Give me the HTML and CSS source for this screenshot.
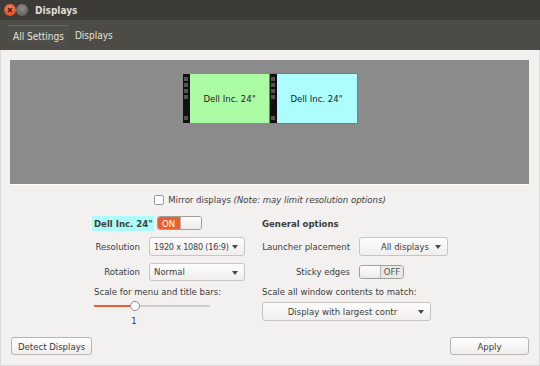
FILE: index.html
```html
<!DOCTYPE html>
<html lang="en">
<head>
  <meta charset="UTF-8">
  <title>Displays</title>
  <link rel="stylesheet" href="styles.css">
</head>
<body>
  <!-- Window title bar -->
  <div class="titlebar">
    <span class="win-btn close">
      <svg width="8" height="8" viewBox="0 0 8 8"><path d="M2 2 L6 6 M6 2 L2 6" stroke="#3a1a12" stroke-width="1.3"/></svg>
    </span>
    <span class="win-btn minimize"></span>
    <span class="title">Displays</span>
  </div>

  <!-- Toolbar -->
  <div class="toolbar">
    <span class="tab active">All Settings</span>
    <span class="tab">Displays</span>
  </div>

  <div class="content">
    <!-- Monitor arrangement -->
    <div class="arrangement">
      <div class="monitors">
        <div class="monitor green">
          <div class="strip"><i></i><i></i><i></i><i></i><i class="last"></i></div>
          <div class="screen">Dell Inc. 24"</div>
        </div>
        <div class="monitor cyan selected">
          <div class="strip"><i></i><i></i><i></i><i></i><i class="last"></i></div>
          <div class="screen">Dell Inc. 24"</div>
        </div>
      </div>
    </div>

    <div class="mirror">
      <span class="checkbox"></span>
      <span>Mirror displays <em>(Note: may limit resolution options)</em></span>
    </div>

    <div class="settings">
      <!-- Monitor options -->
      <div class="column left">
        <div class="head">
          <span class="monitor-name">Dell Inc. 24"</span>
          <span class="switch on"><b>ON</b><i></i></span>
        </div>
        <div class="field">
          <span class="label">Resolution</span>
          <span class="combo res">1920 x 1080 (16:9)<span class="arrow"></span></span>
        </div>
        <div class="field">
          <span class="label">Rotation</span>
          <span class="combo rot">Normal<span class="arrow"></span></span>
        </div>
        <div class="caption">Scale for menu and title bars:</div>
        <div class="slider">
          <div class="track"><div class="fill" style="width: 40px;"></div><div class="knob"></div></div>
          <div class="value">1</div>
        </div>
      </div>

      <!-- General options -->
      <div class="column right">
        <div class="head bold">General options</div>
        <div class="field">
          <span class="label">Launcher placement</span>
          <span class="combo launcher">All displays<span class="arrow"></span></span>
        </div>
        <div class="field">
          <span class="label">Sticky edges</span>
          <span class="switch off"><i></i><b>OFF</b></span>
        </div>
        <div class="caption">Scale all window contents to match:</div>
        <span class="combo wide">Display with largest contr<span class="arrow"></span></span>
      </div>
    </div>

    <div class="actions">
      <button>Detect Displays</button>
      <button class="apply">Apply</button>
    </div>
  </div>
</body>
</html>
```

FILE: styles.css
```css
/* Window chrome */
body {
  margin: 0;
  width: 540px;
  height: 366px;
  overflow: hidden;
  background: #f2f1f0;
  font-family: "DejaVu Sans Condensed", "DejaVu Sans", sans-serif;
  font-size: 9.5px;
  color: #3c3c3c;
}
.titlebar {
  height: 20px;
  background: #3c3b37;
  display: flex;
  align-items: center;
  padding-left: 4px;
}
.win-btn {
  width: 12px;
  height: 12px;
  border-radius: 50%;
  display: flex;
  align-items: center;
  justify-content: center;
}
.close {
  background: radial-gradient(circle at 50% 35%, #f28a6a, #e2502a 70%);
}
.minimize {
  background: radial-gradient(circle at 50% 35%, #8e8c86, #67655f 70%);
}
.title {
  margin-left: 7px;
  color: #dfdbd2;
  font-weight: bold;
  font-size: 10px;
}
.toolbar {
  height: 30px;
  background: #4c4b46;
  display: flex;
  align-items: center;
  padding-left: 8px;
  gap: 1px;
}
.tab {
  color: #e6e3dc;
  font-size: 10px;
  padding: 5px 5px 4px;
}
.tab.active {
  border-top: 1px solid #6a6963;
  background: #4f4e49;
}

/* Content */
.content {
  height: 316px;
  border: 1px solid #dcdad6;
  border-top: none;
  box-sizing: border-box;
  display: flex;
  flex-direction: column;
}
.arrangement {
  margin: 10px 10px 0 9px;
  height: 125px;
  background: #8b8b8b;
  border-bottom: 1px solid #fff;
  display: flex;
  justify-content: center;
  padding-top: 14px;
  box-sizing: border-box;
}
.monitors {
  display: flex;
  height: 49px;
}
.monitor {
  display: flex;
  width: 87px;
  height: 49px;
  box-sizing: border-box;
}
.monitor.selected {
  outline: 1px solid #d9574a;
}
.strip {
  width: 7px;
  background: #111;
  display: flex;
  flex-direction: column;
  align-items: center;
  padding-top: 3px;
  gap: 2px;
}
.strip i {
  width: 4px;
  height: 4px;
  background: #555;
}
.strip i.last {
  margin-top: auto;
  margin-bottom: 3px;
}
.screen {
  flex: 1;
  display: flex;
  align-items: center;
  justify-content: center;
  font-size: 9.5px;
  color: #222;
}
.green .screen {
  background: #abfca4;
}
.cyan .screen {
  background: #adfdfd;
}

.mirror {
  display: flex;
  justify-content: center;
  align-items: center;
  gap: 4px;
  margin-top: 9px;
}
.checkbox {
  width: 8px;
  height: 8px;
  border: 1px solid #9a9893;
  border-radius: 2px;
  background: #fff;
}

/* Option columns */
.settings {
  display: flex;
  margin-top: 10px;
  padding-left: 93px;
}
.column {
  display: flex;
  flex-direction: column;
}
.column.left {
  width: 168px;
}
.head {
  display: flex;
  align-items: center;
  height: 16px;
  gap: 3px;
  white-space: nowrap;
}
.bold, .monitor-name {
  font-weight: bold;
  color: #3c3c3c;
}
.monitor-name {
  background: #adfcfd;
  padding: 2px 1px 2px 2px;
  margin-left: -2px;
}
.field {
  display: flex;
  align-items: center;
  height: 19px;
  margin-top: 6px;
  gap: 9px;
  white-space: nowrap;
}
.left .label {
  width: 46px;
  text-align: right;
}
.right .label {
  width: 88px;
  text-align: right;
}
.combo {
  height: 19px;
  box-sizing: border-box;
  border: 1px solid #c8c5c0;
  border-radius: 3px;
  background: linear-gradient(#fdfdfd, #f0efed);
  display: flex;
  align-items: center;
  padding: 0 6px;
  position: relative;
  white-space: nowrap;
}
.arrow {
  position: absolute;
  right: 6px;
  top: 7px;
  border-left: 3px solid transparent;
  border-right: 3px solid transparent;
  border-top: 4px solid #4a4a4a;
}
.combo.res {
  width: 96px;
  padding-left: 4px;
  font-size: 9px;
  letter-spacing: -0.2px;
}
.combo.rot {
  width: 96px;
  height: 18px;
  padding-left: 4px;
}
.combo.launcher {
  width: 89px;
  justify-content: flex-end;
  padding-right: 18px;
}
.combo.wide {
  width: 169px;
  justify-content: center;
  padding-right: 14px;
  margin-top: 4px;
}
.caption {
  margin-top: 3px;
  height: 14px;
  display: flex;
  align-items: center;
  white-space: nowrap;
}
.switch {
  display: flex;
  width: 45px;
  height: 14px;
  border: 1px solid #a19f9a;
  border-radius: 3px;
  box-sizing: border-box;
  overflow: hidden;
  font-size: 9.5px;
}
.switch b {
  flex: 1;
  display: flex;
  align-items: center;
  justify-content: center;
  font-weight: normal;
}
.switch i {
  width: 20px;
  background: linear-gradient(#fdfdfd, #eceae7);
}
.switch.on b {
  background: #e8602f;
  color: #fff;
}
.switch.off b {
  background: #eae8e4;
  color: #555;
  border-left: 1px solid #b5b3ae;
}
.switch.on i {
  border-left: 1px solid #b5b3ae;
}
.slider {
  width: 116px;
  margin-top: 7px;
}
.track {
  position: relative;
  height: 2px;
  background: #cfcdc9;
  border-radius: 1px;
}
.fill {
  height: 2px;
  background: #e8602f;
}
.knob {
  position: absolute;
  left: 36px;
  top: -4px;
  width: 8px;
  height: 8px;
  border: 1px solid #8c8a85;
  border-radius: 50%;
  background: #fff;
}
.value {
  width: 80px;
  text-align: center;
  margin-top: 8px;
}

/* Bottom buttons */
.actions {
  margin-top: auto;
  display: flex;
  justify-content: space-between;
  padding: 0 10px 10px 10px;
}
button {
  font-family: inherit;
  font-size: 9.5px;
  color: #3c3c3c;
  height: 18px;
  padding: 0 6px;
  border: 1px solid #b8b5b0;
  border-radius: 3px;
  background: linear-gradient(#fefefe, #efeeec);
}
button.apply {
  width: 79px;
}
```
